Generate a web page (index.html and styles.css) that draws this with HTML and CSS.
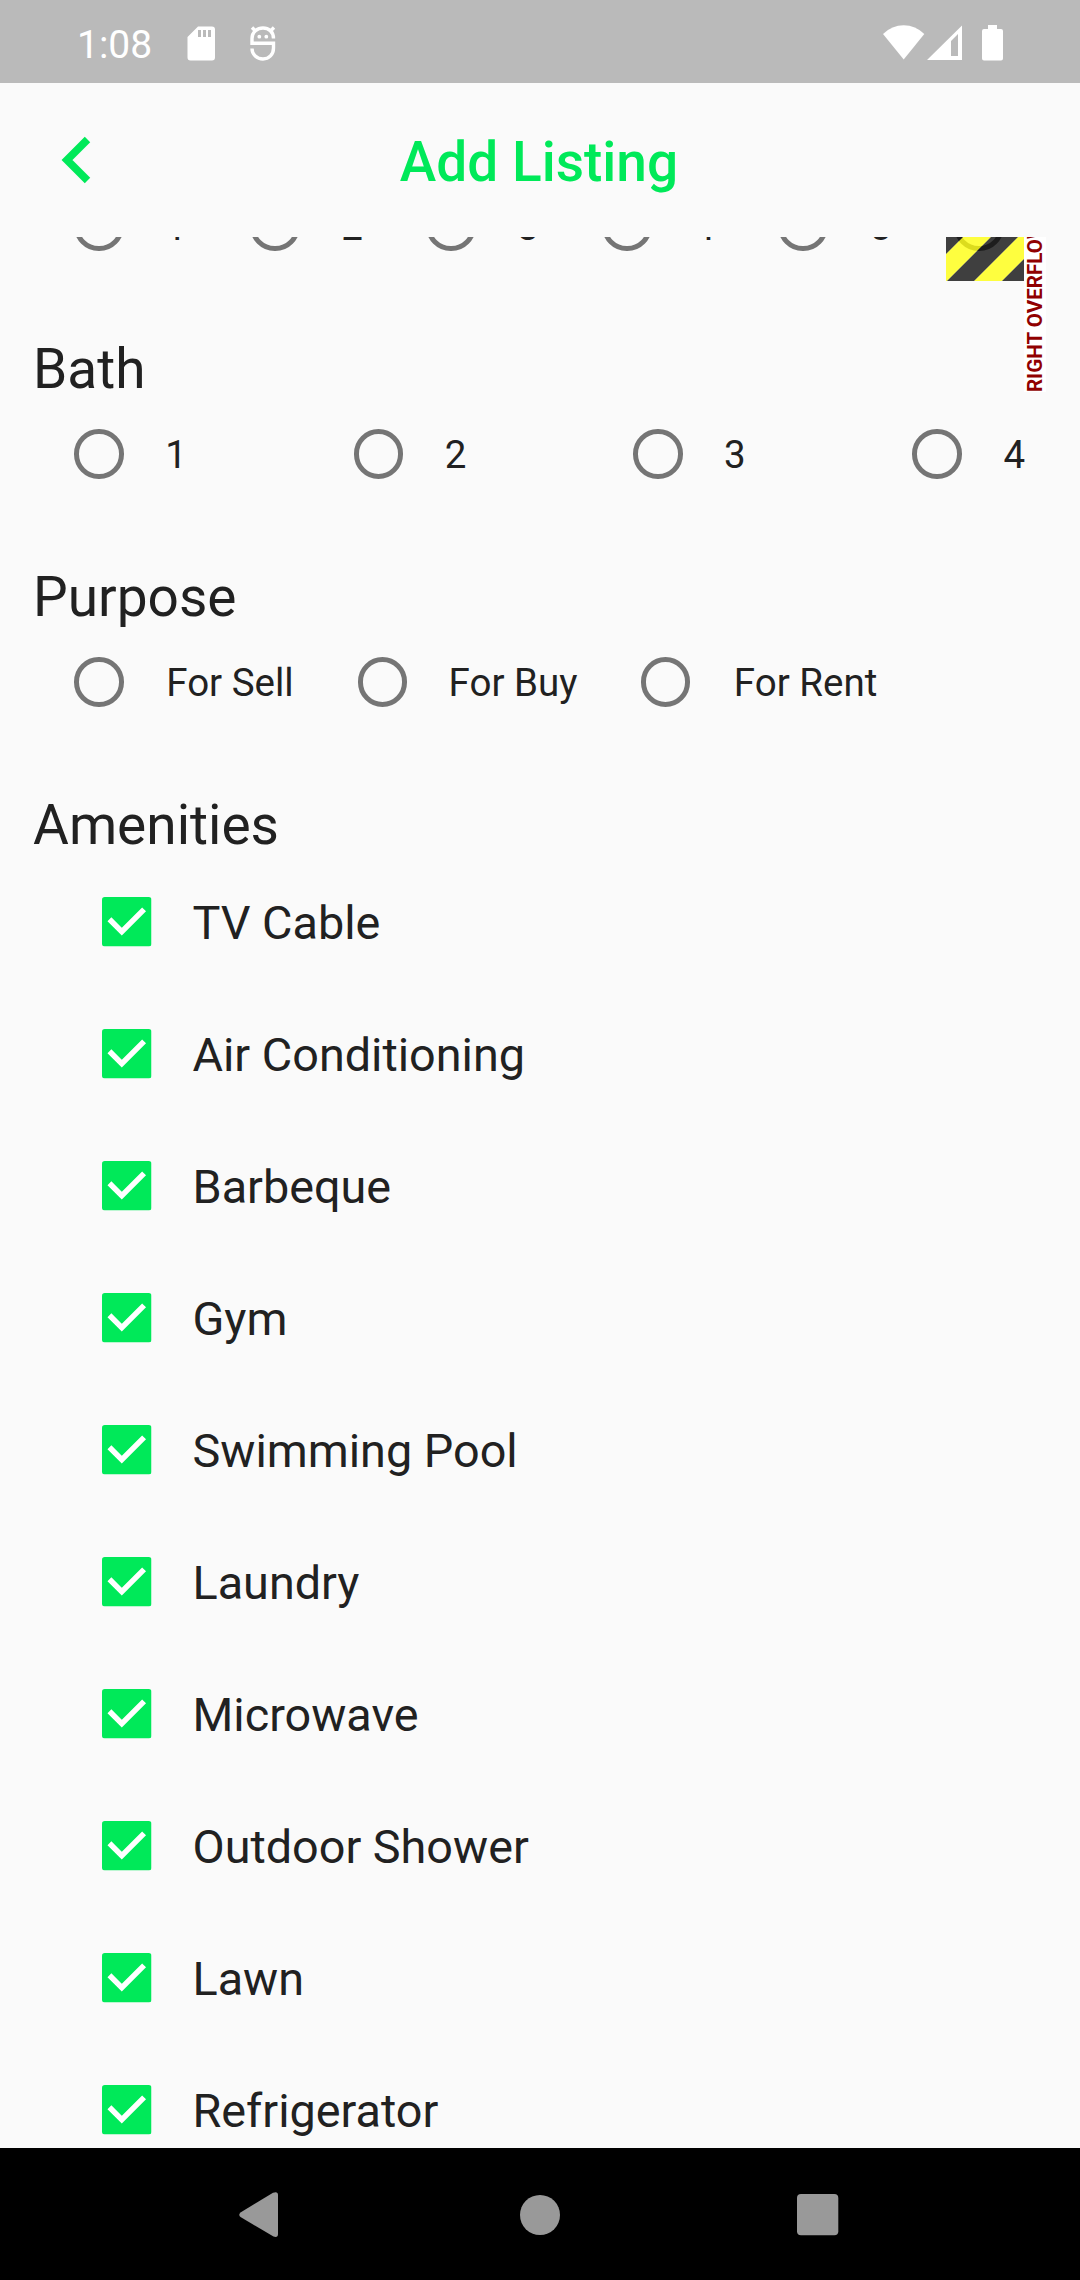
FILE: index.html
```html
<!DOCTYPE html>
<html lang="en">
<head>
<meta charset="utf-8">
<title>Add Listing</title>
<link rel="stylesheet" href="styles.css">
</head>
<body>
<header class="status">
  <span class="time">1:08</span>
  <svg class="sd" width="28" height="36" viewBox="0 0 28 36"><path fill="#fff" fill-rule="evenodd" d="M11 .5H25Q28 .5 28 3.5V31.500Q28 34.500 25 34.500H3.500Q.5 34.500 .5 31.500V11ZM11 4V11H14V4ZM16 4V11H19V4ZM21 4V11H24V4Z"/></svg>
  <svg class="bug" width="26" height="36" viewBox="0 0 26 36" fill="none" stroke="#fff" stroke-width="3.4"><path d="M23.500 12.500C23.500 5.500 18.500 2 13 2S2 6 2 12.500V17.300H23.500V22C23.500 28.500 19 33 13 33S2 28.500 2 22.500M2 1.500L5.500 5M24 1.500L20.500 5"/><circle cx="9.300" cy="10.700" r="1.900" fill="#fff" stroke="none"/><circle cx="16.300" cy="10.700" r="1.900" fill="#fff" stroke="none"/></svg>
  <svg class="wifi" width="42" height="36" viewBox="0 0 42 36"><path fill="#fff" d="M0 9Q9 .3 20.700 .3T41.300 9L20.700 34.500Z"/></svg>
  <svg class="signal" width="36" height="36" viewBox="0 0 36 36"><path fill="#fff" fill-rule="evenodd" d="M0 35L35 .5V35ZM24 16V31H31V9Z"/></svg>
  <svg class="battery" width="22" height="36" viewBox="0 0 22 36"><path fill="#fff" d="M6 0H15V4H19Q21 4 21 6V33.500Q21 35.500 19 35.500H2Q0 35.500 0 33.500V6Q0 4 2 4H6Z"/></svg>
</header>
<div class="appbar">
  <svg class="back" width="30" height="48" viewBox="0 0 30 48"><path fill="none" stroke="#00e959" stroke-width="7.700" d="M26.500 3.500L6 24L26.500 44.500"/></svg>
  <h1>Add Listing</h1>
</div>
<main>
  <div class="radios beds">
    <div class="option"><i class="ring"></i><span>1</span></div>
    <div class="option"><i class="ring"></i><span>2</span></div>
    <div class="option"><i class="ring"></i><span>3</span></div>
    <div class="option"><i class="ring"></i><span>4</span></div>
    <div class="option"><i class="ring"></i><span>5</span></div>
    <div class="option"><i class="ring"></i></div>
    <svg class="stripes" width="78" height="44" viewBox="0 0 78 44">
      <path fill="#ff0" fill-opacity=".75" d="M17 0H45L1 44H0V17ZM72 0H78V22L56 44H28Z"/>
      <path fill-opacity=".75" d="M0 0H17L0 17ZM45 0H72L28 44H1ZM78 22V44H56Z"/>
    </svg>
    <div class="overflow-note">RIGHT OVERFLOW</div>
  </div>
  <h2>Bath</h2>
  <div class="radios baths">
    <div class="option"><i class="ring"></i><span>1</span></div>
    <div class="option"><i class="ring"></i><span>2</span></div>
    <div class="option"><i class="ring"></i><span>3</span></div>
    <div class="option"><i class="ring"></i><span>4</span></div>
  </div>
  <h2>Purpose</h2>
  <div class="radios purposes">
    <div class="option sell"><i class="ring"></i><span>For Sell</span></div>
    <div class="option"><i class="ring"></i><span>For Buy</span></div>
    <div class="option rent"><i class="ring"></i><span>For Rent</span></div>
  </div>
  <h2>Amenities</h2>
  <svg width="0" height="0" class="defs"><symbol id="check" viewBox="0 0 18 18"><rect width="18" height="18" rx="1" fill="#00e959"/><path d="M2.700 8.100L7.200 12.600L15.300 4.500" fill="none" stroke="#fff" stroke-width="2"/></symbol></svg>
  <ul class="amenities">
    <li><svg class="box"><use href="#check"/></svg><span>TV Cable</span></li>
    <li><svg class="box"><use href="#check"/></svg><span>Air Conditioning</span></li>
    <li><svg class="box"><use href="#check"/></svg><span>Barbeque</span></li>
    <li><svg class="box"><use href="#check"/></svg><span>Gym</span></li>
    <li><svg class="box"><use href="#check"/></svg><span>Swimming Pool</span></li>
    <li><svg class="box"><use href="#check"/></svg><span>Laundry</span></li>
    <li><svg class="box"><use href="#check"/></svg><span>Microwave</span></li>
    <li><svg class="box"><use href="#check"/></svg><span>Outdoor Shower</span></li>
    <li><svg class="box"><use href="#check"/></svg><span>Lawn</span></li>
    <li><svg class="box"><use href="#check"/></svg><span>Refrigerator</span></li>
  </ul>
</main>
<nav>
  <svg width="42" height="46" viewBox="0 0 42 46"><path fill="#999" d="M1.500 20.500L34 .8Q39 -1 39 3V42Q39 46 34.500 44.500L1.500 25Q-1 22.750 1.500 20.500Z"/></svg>
  <svg width="42" height="42" viewBox="0 0 42 42"><circle cx="21" cy="21" r="20" fill="#999"/></svg>
  <svg width="46" height="42" viewBox="0 0 46 42"><rect width="41.300" height="41.300" rx="4" fill="#999"/></svg>
</nav>
</body>
</html>
```
FILE: styles.css
```css
* { box-sizing: border-box; }
body {
  margin: 0;
  width: 1080px;
  height: 2280px;
  display: flex;
  flex-direction: column;
  overflow: hidden;
  background: #fafafa;
  color: #212121;
  font-family: Roboto, sans-serif;
}
svg { display: block; flex: none; }

.status {
  flex: none;
  height: 83px;
  display: flex;
  align-items: flex-start;
  padding: 25px 76px 0 77px;
  background: #bababa;
  color: #fff;
}
.time { width: 110px; font-size: 39px; line-height: 40px; }
.sd { margin-top: 1px; }
.bug { margin: 1px 0 0 35px; }
.wifi { margin-left: auto; }
.signal { margin-left: 2px; }
.battery { margin-left: 19px; }

.appbar {
  flex: none;
  height: 154px;
  display: grid;
  grid-template-columns: 30px 1fr 30px;
  align-items: center;
  padding: 0 62px 0 61px;
}
h1 {
  margin: 0;
  padding: 3px 1px 0 0;
  text-align: center;
  font-size: 55px;
  font-weight: 500;
  line-height: 64px;
  color: #00e959;
}

main { flex: 1; min-height: 0; overflow: hidden; }
h2 {
  margin: 0;
  height: 118px;
  padding: 58px 0 0 33px;
  font-size: 55px;
  font-weight: 400;
  line-height: 60px;
}
.radios {
  height: 110px;
  display: flex;
  padding-left: 74.25px;
  font-size: 38.5px;
  line-height: 46px;
}
.option { flex: none; display: flex; align-items: center; gap: 41.500px; }
.option span { padding-top: 1px; white-space: nowrap; }
.ring {
  width: 49.500px;
  height: 49.500px;
  border: 5.500px solid #757575;
  border-radius: 50%;
}
.beds { position: relative; margin-top: -66px; }
.beds .option { width: 176px; }
.baths .option { width: 279.400px; }
.purposes .option { width: 283.300px; }
.purposes .sell { gap: 42.500px; }
.purposes .rent { gap: 43.500px; }

.stripes {
  position: absolute;
  left: 946px;
  top: 66px;
}
.overflow-note {
  position: absolute;
  left: 1024px;
  bottom: -111px;
  width: 22px;
  background: #fff;
  color: #900000;
  font-size: 20.600px;
  font-weight: 700;
  line-height: 23px;
  white-space: nowrap;
  writing-mode: vertical-rl;
  transform: rotate(180deg);
}

.defs { position: absolute; }
.amenities { list-style: none; margin: 0; padding: 1px 0 0 102px; }
.amenities li {
  height: 132px;
  display: flex;
  align-items: center;
  gap: 41px;
  font-size: 46.750px;
  line-height: 56px;
}
.amenities span { padding-top: 1px; }
.box { width: 49.500px; height: 49.500px; }

nav {
  flex: none;
  height: 132px;
  display: grid;
  grid-template-columns: repeat(3, 280px);
  justify-content: center;
  justify-items: center;
  align-items: center;
  padding-top: 1px;
  background: #000;
}
```
